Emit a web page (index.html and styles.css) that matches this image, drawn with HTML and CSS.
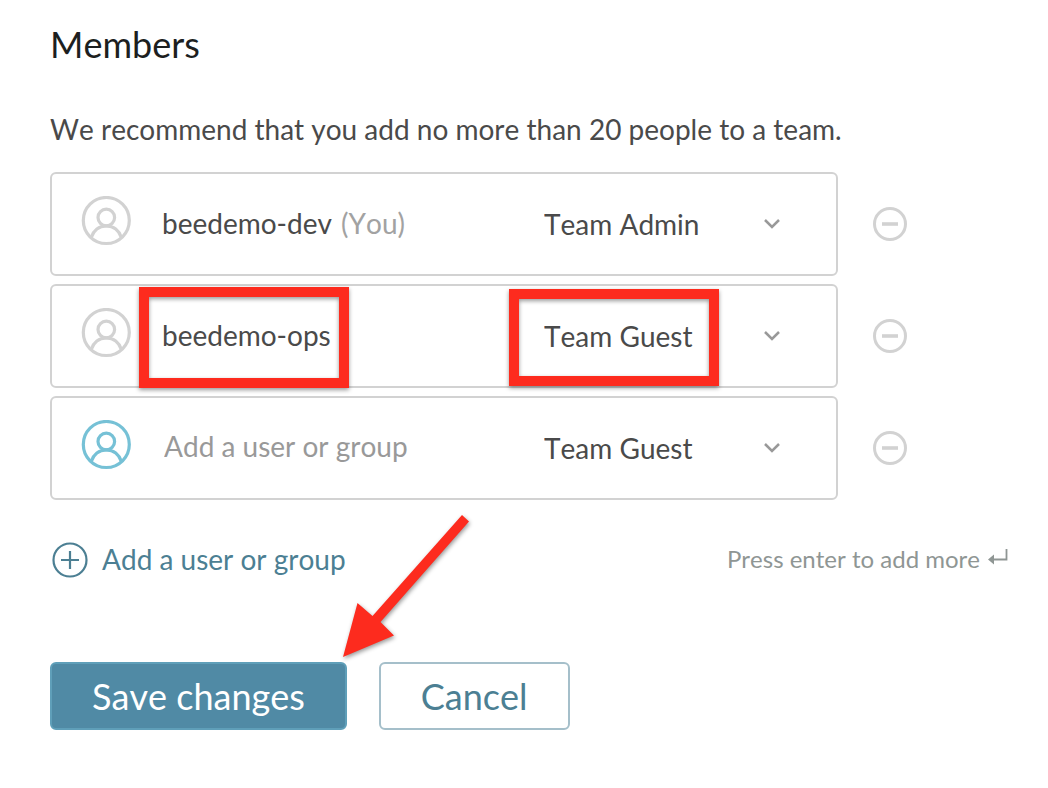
FILE: index.html
```html
<!DOCTYPE html>
<html lang="en">
<head>
<meta charset="utf-8">
<meta name="viewport" content="width=device-width, initial-scale=1">
<title>Members</title>
<link rel="stylesheet" href="styles.css">
</head>
<body>
<svg class="sprite" aria-hidden="true">
  <symbol id="avatar" viewBox="0 0 50 50">
    <g fill="none" stroke="currentColor" stroke-width="3.2">
      <circle cx="25.3" cy="24.500" r="23"/>
      <circle cx="25.3" cy="21.500" r="8.3"/>
      <path d="M10.200 41.500C12.500 34.500 18 29.800 25.300 29.800S38.100 34.500 40.400 41.500"/>
    </g>
  </symbol>
  <symbol id="chevron" viewBox="0 0 16 10">
    <path d="M1 1L8 8L15 1" fill="none" stroke="currentColor" stroke-width="2.500"/>
  </symbol>
  <symbol id="minus" viewBox="0 0 34 34">
    <circle cx="17" cy="17" r="15.500" fill="none" stroke="currentColor" stroke-width="3"/>
    <path d="M9 17H25" stroke="currentColor" stroke-width="3.600"/>
  </symbol>
</svg>
<main class="members">
  <h1 class="title">Members</h1>
  <p class="hint">We recommend that you add no more than 20 people to a team.</p>
  <form class="form">
    <ul class="list">
      <li class="row">
        <div class="card">
          <svg class="avatar"><use href="#avatar"/></svg>
          <span class="name">beedemo-dev <span class="you">(You)</span></span>
          <div class="role">
            <select class="role-select" aria-label="Role of beedemo-dev"><option>Team Admin</option><option>Team Guest</option></select>
            <svg class="chevron"><use href="#chevron"/></svg>
          </div>
        </div>
        <button class="remove" type="button" aria-label="Remove beedemo-dev"><svg class="minus"><use href="#minus"/></svg></button>
      </li>
      <li class="row">
        <div class="card">
          <svg class="avatar"><use href="#avatar"/></svg>
          <span class="name">beedemo-ops</span>
          <div class="role">
            <select class="role-select" aria-label="Role of beedemo-ops"><option>Team Guest</option><option>Team Admin</option></select>
            <svg class="chevron"><use href="#chevron"/></svg>
          </div>
          <div class="mark mark-name"></div>
          <div class="mark mark-role"></div>
        </div>
        <button class="remove" type="button" aria-label="Remove beedemo-ops"><svg class="minus"><use href="#minus"/></svg></button>
      </li>
      <li class="row">
        <div class="card">
          <svg class="avatar avatar-new"><use href="#avatar"/></svg>
          <input class="name name-input" type="text" placeholder="Add a user or group" aria-label="Add a user or group">
          <div class="role">
            <select class="role-select" aria-label="Role of new member"><option>Team Guest</option><option>Team Admin</option></select>
            <svg class="chevron"><use href="#chevron"/></svg>
          </div>
        </div>
        <button class="remove" type="button" aria-label="Remove new member"><svg class="minus"><use href="#minus"/></svg></button>
      </li>
    </ul>
    <div class="more">
      <button class="add" type="button">
        <svg class="plus" viewBox="0 0 36 36" fill="none" stroke="currentColor"><circle cx="18" cy="18" r="16.500" stroke-width="2.200"/><path d="M18 9V27M9 18H27" stroke-width="2.200"/></svg>
        <span class="add-label">Add a user or group</span>
      </button>
      <span class="enter">Press enter to add more
        <svg class="return" viewBox="0 0 20 16"><path d="M18.500 0V10.500H5" fill="none" stroke="currentColor" stroke-width="1.800"/><path d="M0 10.500L6 5.500V15.500Z" fill="currentColor"/></svg>
      </span>
    </div>
    <div class="actions">
      <button class="button save" type="submit">Save changes</button>
      <button class="button cancel" type="button">Cancel</button>
      <svg class="arrow" viewBox="0 0 126 142"><path d="M119 0L126 6.500L37.500 107L51 120.500L0 142L14.500 88L29.500 101Z" fill="#fd2b1e"/></svg>
    </div>
  </form>
</main>
</body>
</html>
```
FILE: styles.css
```css
* {
  box-sizing: border-box;
}

body {
  margin: 0;
  background: #fff;
  color: #4a4a4a;
  font-family: Lato, "Liberation Sans", sans-serif;
  font-size: 28px;
  font-kerning: none;
  line-height: 36px;
}

button,
input,
select {
  margin: 0;
  padding: 0;
  border: 0;
  background: none;
  color: inherit;
  font: inherit;
  font-kerning: none;
  appearance: none;
}

.sprite {
  position: absolute;
  width: 0;
  height: 0;
}

.members {
  padding: 22px 40px 40px 50px;
}

.title {
  margin: 0;
  color: #1d1f1f;
  font-size: 36px;
  font-weight: 400;
  line-height: 44px;
}

.hint {
  margin: 45px 0 25px;
}

.list {
  display: grid;
  gap: 8px;
  margin: 0;
  padding: 0;
  list-style: none;
}

.row {
  display: flex;
  align-items: center;
  gap: 35px;
  padding-right: 101px;
}

.card {
  position: relative;
  display: flex;
  flex: 1;
  align-items: center;
  min-height: 104px;
  padding: 0 52px 0 29px;
  border: 2px solid #d2d2d2;
  border-radius: 6px;
}

.avatar {
  width: 50px;
  height: 50px;
  margin: 0 31px 6px 0;
  color: #d2d2d2;
}

.avatar-new {
  color: #76c1d6;
}

.name {
  flex: 1;
  min-width: 0;
  padding-bottom: 2px;
}

.name-input {
  height: 36px;
  padding: 0 2px 4px;
}

.name-input::placeholder {
  color: #999;
  opacity: 1;
}

.you {
  margin-left: 2px;
  color: #a2a2a2;
}

.role {
  display: grid;
  align-items: center;
  width: 240px;
}

.role-select,
.chevron {
  grid-area: 1 / 1;
}

.role-select {
  height: 36px;
  padding-bottom: 4px;
}

.chevron {
  justify-self: end;
  width: 16px;
  height: 10px;
  margin-right: 4px;
  color: #999;
  pointer-events: none;
}

.remove {
  display: flex;
  color: #d2d2d2;
}

.minus {
  width: 34px;
  height: 34px;
}

.mark {
  position: absolute;
  width: 210px;
  border: 10px solid #fd2b1e;
  filter: drop-shadow(0 2px 2px rgba(0, 0, 0, 0.4));
  pointer-events: none;
}

.mark-name {
  top: 1px;
  left: 87px;
  height: 101px;
}

.mark-role {
  top: 3px;
  right: 117px;
  height: 97px;
}

.more {
  display: flex;
  align-items: center;
  justify-content: space-between;
  margin-top: 41px;
}

.add {
  display: flex;
  align-items: center;
  gap: 14px;
  padding-left: 2px;
  color: #4c7f93;
}

.add-label {
  padding-bottom: 2px;
}

.plus {
  width: 36px;
  height: 36px;
}

.enter {
  display: flex;
  gap: 8px;
  padding-bottom: 2px;
  color: #8f9694;
  font-size: 24px;
}

.return {
  width: 20px;
  height: 16px;
  margin-top: 8px;
}

.actions {
  position: relative;
  display: flex;
  gap: 32px;
  margin-top: 83px;
}

.button {
  height: 68px;
  padding: 0 40px;
  border: 2px solid #a5bfca;
  border-radius: 6px;
  font-size: 36px;
  line-height: 64px;
}

.save {
  border-color: #5f9fb9;
  background: #508aa5;
  color: #fff;
}

.cancel {
  color: #4c7f93;
}

.arrow {
  position: absolute;
  top: -147px;
  left: 293px;
  width: 126px;
  height: 142px;
  overflow: visible;
  filter: drop-shadow(1px 2px 2px rgba(0, 0, 0, 0.4));
  pointer-events: none;
}
```
